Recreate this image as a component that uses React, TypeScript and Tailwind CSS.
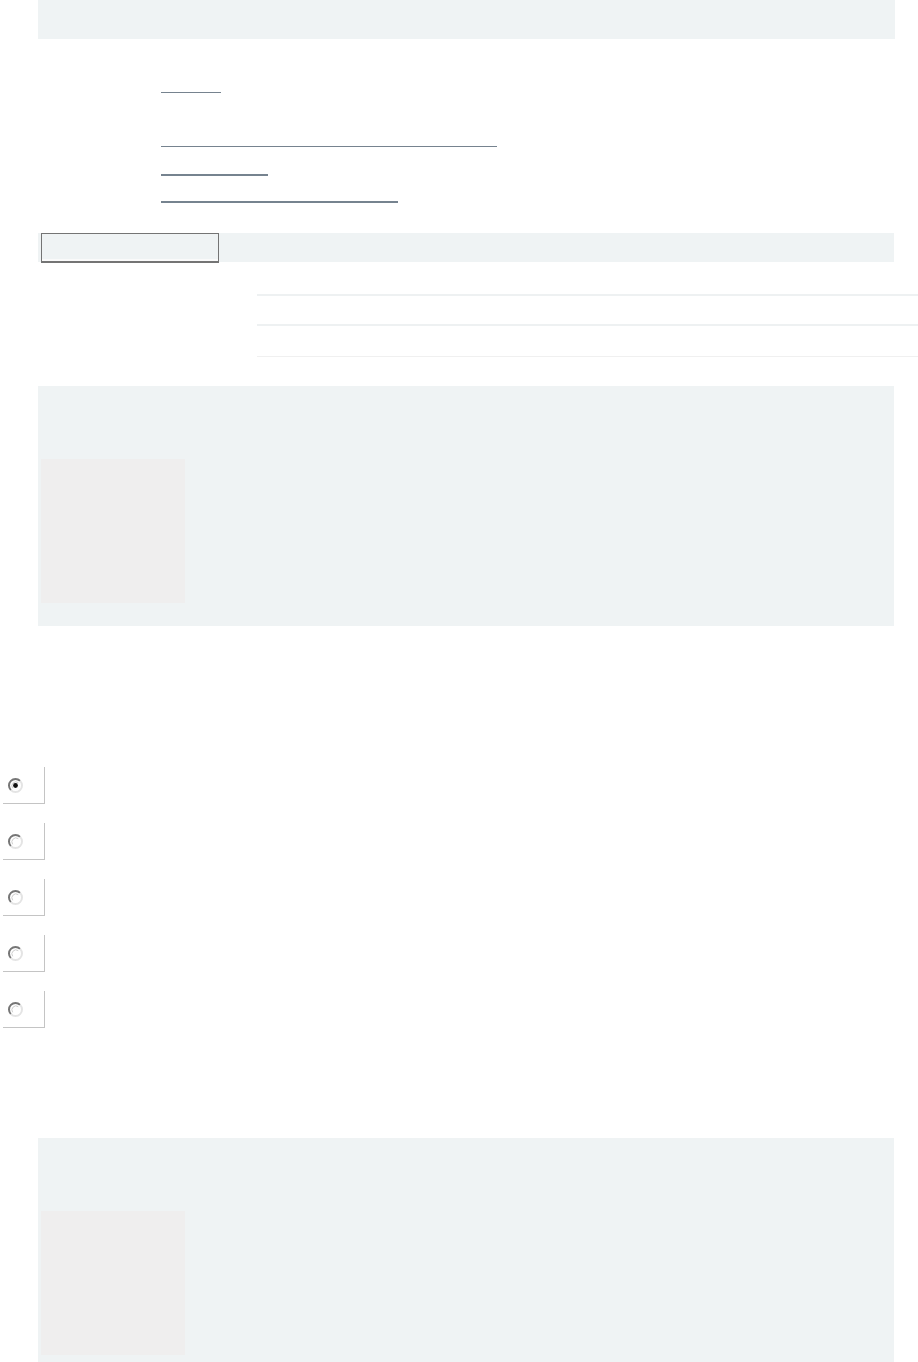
import React from 'react';

function Radio({ checked }: { checked?: boolean }) {
  return (
    <div className="flex h-[37px] w-[42px] items-center border-r border-b border-[#c4c4c4] pl-[4px]">
      <svg width="17" height="17" viewBox="0 0 17 17">
        <circle cx="8.5" cy="8.5" r="6.5" fill="#fff" />
        {/* dark upper-left half, light lower-right half */}
        <path d="M13.1 3.9 A6.5 6.5 0 0 0 3.9 13.1" fill="none" stroke="#767676" strokeWidth="2" />
        <path d="M3.9 13.1 A6.5 6.5 0 0 0 13.1 3.9" fill="none" stroke="#e4e4e4" strokeWidth="2" />
        <path d="M11.3 5.7 A4 4 0 0 0 5.7 11.3" fill="none" stroke="#cfcfcf" strokeWidth="1" />
        {checked ? <circle cx="8.5" cy="8.5" r="2.4" fill="#111" /> : null}
      </svg>
    </div>
  );
}

function Panel() {
  return (
    <div className="ml-[38px] h-[240px] w-[856px] bg-[#eff3f4] pt-[73px]">
      <div className="ml-[3px] h-[144px] w-[144px] bg-[#efeeee]" />
    </div>
  );
}

export default function App() {
  return (
    <div className="relative min-h-[1362px] w-[918px] overflow-hidden bg-white font-['Liberation_Sans',sans-serif]">
      {/* top band */}
      <div className="ml-[38px] h-[39px] w-[857px] bg-[#eff3f4]" />

      {/* link list, underlines only */}
      <div className="flex flex-col items-start pl-[161px]">
        <a className="mt-[53px] block h-px w-[60px] bg-[#76838f]" />
        <a className="mt-[53px] block h-px w-[336px] bg-[#76838f]" />
        <a className="mt-[27px] block h-[2px] w-[107px] bg-[#76838f]" />
        <a className="mt-[25px] block h-[2px] w-[237px] bg-[#76838f]" />
      </div>

      {/* tab bar */}
      <div className="mt-[30px] ml-[38px] flex h-[29px] w-[856px] bg-[#eff3f4]">
        <div className="ml-[3px] flex h-[30px] w-[178px] flex-col border border-b-2 border-[#747474] bg-[#eff3f4]">
          <div className="flex-1" />
          <div className="h-[2px] bg-[#fafafa]" />
        </div>
      </div>

      {/* table rows */}
      <div className="ml-[257px] flex flex-col">
        <div className="mt-[32px] h-[2px] bg-[#eef1f2]" />
        <div className="mt-[28px] h-[2px] bg-[#eef1f2]" />
        <div className="mt-[30px] h-px bg-[#f0f0f0]" />
      </div>

      <div className="mt-[29px]">
        <Panel />
      </div>

      {/* radio list */}
      <div className="mt-[141px] ml-[3px] flex flex-col gap-[19px]">
        <Radio checked />
        <Radio />
        <Radio />
        <Radio />
        <Radio />
      </div>

      <div className="mt-[110px]">
        <Panel />
      </div>
    </div>
  );
}
